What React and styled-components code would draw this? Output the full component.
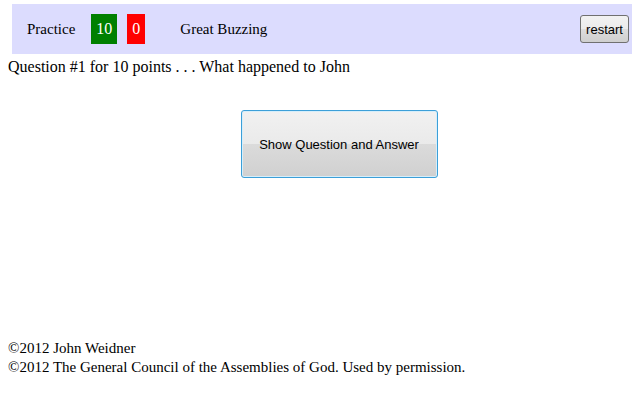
import styled, { createGlobalStyle } from "styled-components";

const GlobalStyle = createGlobalStyle`
   html, body {
      margin: 0;
      padding: 0;
      background: #ffffff;
   }

   body {
      font-family: "Liberation Serif", "Times New Roman", serif;
      font-size: 16px;
      color: #000000;
   }
`;

const Page = styled.div`
   width: 640px;
   height: 400px;
   display: flex;
   flex-direction: column;
   padding: 4px 8px 0 8px;
   box-sizing: border-box;
`;

const ScoreBar = styled.div`
   display: flex;
   align-items: center;
   height: 50px;
   margin-left: 4px;
   padding: 0 3px 0 15px;
   font-size: 15px;
   background: #dcdcfe;
   box-sizing: border-box;
`;

const Label = styled.span`
   margin-right: ${({ $gap }) => $gap || 0}px;
`;

const Score = styled.span`
   display: flex;
   align-items: center;
   justify-content: center;
   width: ${({ $width }) => $width}px;
   height: 30px;
   margin-right: ${({ $gap }) => $gap || 0}px;
   font-size: 16px;
   color: #ffffff;
   background: ${({ $color }) => $color};
`;

const RestartButton = styled.button`
   margin-left: auto;
   width: 49px;
   height: 28px;
   padding: 0;
   font-family: "Liberation Sans", Arial, sans-serif;
   font-size: 13px;
   color: #000000;
   border: 1px solid #707070;
   border-radius: 3px;
   background: linear-gradient(#f2f2f2 0%, #ebebeb 50%, #dddddd 50%, #cfcfcf 100%);
`;

const Question = styled.div`
   margin-top: 4px;
   line-height: 18px;
`;

const ButtonRow = styled.div`
   display: flex;
   justify-content: center;
   padding-left: 38px;
   margin-top: 34px;
`;

const RevealButton = styled.button`
   width: 197px;
   height: 68px;
   padding: 0;
   font-family: "Liberation Sans", Arial, sans-serif;
   font-size: 13px;
   color: #000000;
   border: 1px solid #3c9fd8;
   border-radius: 3px;
   box-shadow: inset 0 0 0 1px #d6eefa;
   background: linear-gradient(#f1f1f1 0%, #eaeaea 50%, #dbdbdb 50%, #d0d0d0 100%);
`;

const Footer = styled.div`
   margin-top: auto;
   margin-bottom: 23px;
   font-size: 15px;
   line-height: 19px;
`;

function App() {
   return (
      <>
         <GlobalStyle />
         <Page>
            <ScoreBar>
               <Label $gap={16}>Practice</Label>
               <Score $color="#008000" $width={26} $gap={10}>10</Score>
               <Score $color="#ff0000" $width={18} $gap={35}>0</Score>
               <Label>Great Buzzing</Label>
               <RestartButton>restart</RestartButton>
            </ScoreBar>

            <Question>Question #1 for 10 points . . . What happened to John</Question>

            <ButtonRow>
               <RevealButton>Show Question and Answer</RevealButton>
            </ButtonRow>

            <Footer>
               <div>©2012 John Weidner</div>
               <div>©2012 The General Council of the Assemblies of God. Used by permission.</div>
            </Footer>
         </Page>
      </>
   );
}

export default App;
